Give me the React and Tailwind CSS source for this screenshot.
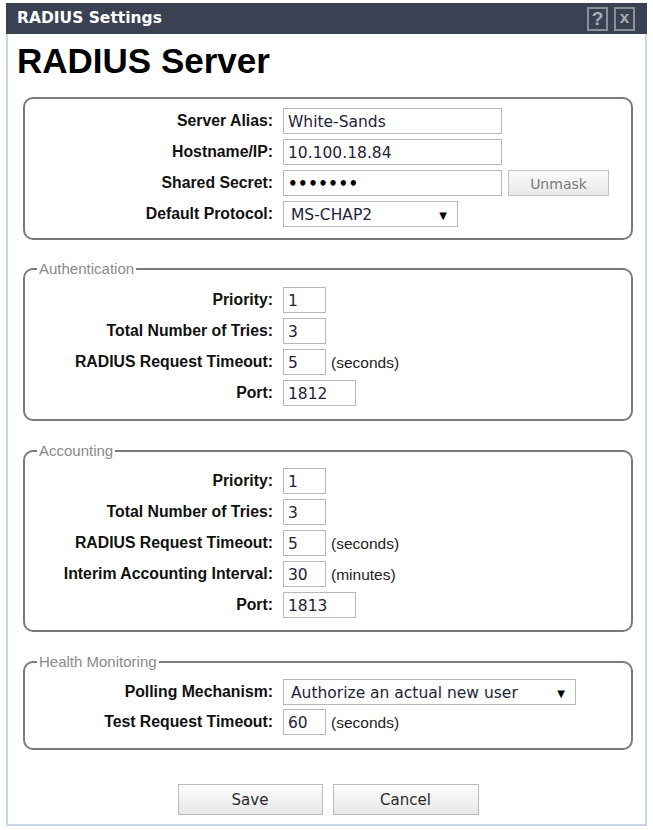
import React from "react";

const ARIAL = "font-['Liberation_Sans',Arial,sans-serif]";
const DEJA = "font-['DejaVu_Sans',Verdana,sans-serif]";

function Label({ children }) {
  return (
    <div className={`${ARIAL} text-right font-bold text-[15.8px] text-[#111] leading-[26px] whitespace-nowrap`}>
      {children}
    </div>
  );
}

function Field({ w, children }) {
  return (
    <div className={`${DEJA} ${w} h-[26px] border border-[#b8b8b8] bg-white pl-[4px] pt-[3px] flex items-center text-[15.5px] text-[#23233a] whitespace-nowrap`}>
      {children}
    </div>
  );
}

function Select({ w, children }) {
  return (
    <div className={`${DEJA} ${w} h-[26px] border border-[#b8b8b8] bg-white pl-[7px] pr-[10px] pt-[3px] flex items-center justify-between text-[15.5px] text-[#23233a] whitespace-nowrap`}>
      <span>{children}</span>
      <span className="text-[10px] text-black leading-none">▼</span>
    </div>
  );
}

function Unit({ children }) {
  return <span className={`${ARIAL} ml-[5px] pt-[2px] text-[15.5px] text-[#222]`}>{children}</span>;
}

function Grid({ children }) {
  return <div className="grid grid-cols-[248px_1fr] gap-x-[10px] gap-y-[5px] items-center">{children}</div>;
}

function Legend({ children }) {
  return (
    <legend className={`${ARIAL} ml-[12px] px-[2px] text-[15px] leading-[16px] text-[#8a8a8a]`}>{children}</legend>
  );
}

function Btn({ w, children }) {
  return (
    <div className={`${DEJA} ${w} h-[31px] border border-[#b9b9b9] bg-linear-to-b from-[#fcfcfc] to-[#e8e8e8] flex items-center justify-center pt-[2px] text-[15px] text-[#2a2a2a]`}>
      {children}
    </div>
  );
}

export default function App() {
  return (
    <div className="w-[653px] h-[830px] bg-white pt-[3px] pl-[6px]">
      <div className="w-[641px] h-[823px] border-x-2 border-b-2 border-[#c9d6ea] flex flex-col">
        <div className="h-[31px] -mx-[2px] bg-[#3a4152] flex items-center justify-between pl-[11px] pr-[12px]">
          <span className={`${DEJA} font-bold text-[15.5px] text-white`}>RADIUS Settings</span>
          <div className="flex gap-[6px]">
            <div className={`${ARIAL} w-[21px] h-[24px] border-2 border-[#8a8f98] flex items-center justify-center font-bold text-[19px] text-[#a9aeb6] leading-none`}>?</div>
            <div className={`${ARIAL} w-[21px] h-[24px] border-2 border-[#8a8f98] flex items-center justify-center font-bold text-[17px] text-[#a9aeb6] leading-none pb-[2px]`}>x</div>
          </div>
        </div>

        <h1 className={`${ARIAL} mt-[7px] ml-[9px] text-[35px] leading-[40px] font-bold text-black`}>RADIUS Server</h1>

        <div className="mt-[16px] ml-[15px] mr-[12px] border-2 border-[#7a7a7a] rounded-[10px] pt-[9px] pb-[11px]">
          <Grid>
            <Label>Server Alias:</Label>
            <Field w="w-[219px]">White-Sands</Field>
            <Label>Hostname/IP:</Label>
            <Field w="w-[219px]">10.100.18.84</Field>
            <Label>Shared Secret:</Label>
            <div className="flex items-center">
              <Field w="w-[219px]"><span className="text-[15px] font-bold tracking-[0.5px] text-black">•••••••</span></Field>
              <div className={`${DEJA} ml-[6px] w-[101px] h-[26px] border border-[#c2c2c2] bg-linear-to-b from-[#fafafa] to-[#e9e9e9] flex items-center justify-center pt-[2px] text-[14px] text-[#7a7a7a]`}>Unmask</div>
            </div>
            <Label>Default Protocol:</Label>
            <Select w="w-[175px]">MS-CHAP2</Select>
          </Grid>
        </div>

        <fieldset className="mt-[21px] ml-[15px] mr-[12px] border-2 border-[#7a7a7a] rounded-[10px] pt-[10px] pb-[13px] min-w-0">
          <Legend>Authentication</Legend>
          <Grid>
            <Label>Priority:</Label>
            <Field w="w-[43px]">1</Field>
            <Label>Total Number of Tries:</Label>
            <Field w="w-[43px]">3</Field>
            <Label>RADIUS Request Timeout:</Label>
            <div className="flex items-center"><Field w="w-[43px]">5</Field><Unit>(seconds)</Unit></div>
            <Label>Port:</Label>
            <Field w="w-[73px]">1812</Field>
          </Grid>
        </fieldset>

        <fieldset className="mt-[22px] ml-[15px] mr-[12px] border-2 border-[#7a7a7a] rounded-[10px] pt-[9px] pb-[12px] min-w-0">
          <Legend>Accounting</Legend>
          <Grid>
            <Label>Priority:</Label>
            <Field w="w-[43px]">1</Field>
            <Label>Total Number of Tries:</Label>
            <Field w="w-[43px]">3</Field>
            <Label>RADIUS Request Timeout:</Label>
            <div className="flex items-center"><Field w="w-[43px]">5</Field><Unit>(seconds)</Unit></div>
            <Label>Interim Accounting Interval:</Label>
            <div className="flex items-center"><Field w="w-[43px]">30</Field><Unit>(minutes)</Unit></div>
            <Label>Port:</Label>
            <Field w="w-[73px]">1813</Field>
          </Grid>
        </fieldset>

        <fieldset className="mt-[22px] ml-[15px] mr-[12px] border-2 border-[#7a7a7a] rounded-[10px] pt-[9px] pb-[13px] min-w-0">
          <Legend>Health Monitoring</Legend>
          <div className="grid grid-cols-[248px_1fr] gap-x-[10px] gap-y-[4px] items-center">
            <Label>Polling Mechanism:</Label>
            <Select w="w-[293px]">Authorize an actual new user</Select>
            <Label>Test Request Timeout:</Label>
            <div className="flex items-center"><Field w="w-[43px]">60</Field><Unit>(seconds)</Unit></div>
          </div>
        </fieldset>

        <div className="mt-[34px] flex justify-center gap-[10px] pl-[3px]">
          <Btn w="w-[145px]">Save</Btn>
          <Btn w="w-[146px]">Cancel</Btn>
        </div>
      </div>
    </div>
  );
}
